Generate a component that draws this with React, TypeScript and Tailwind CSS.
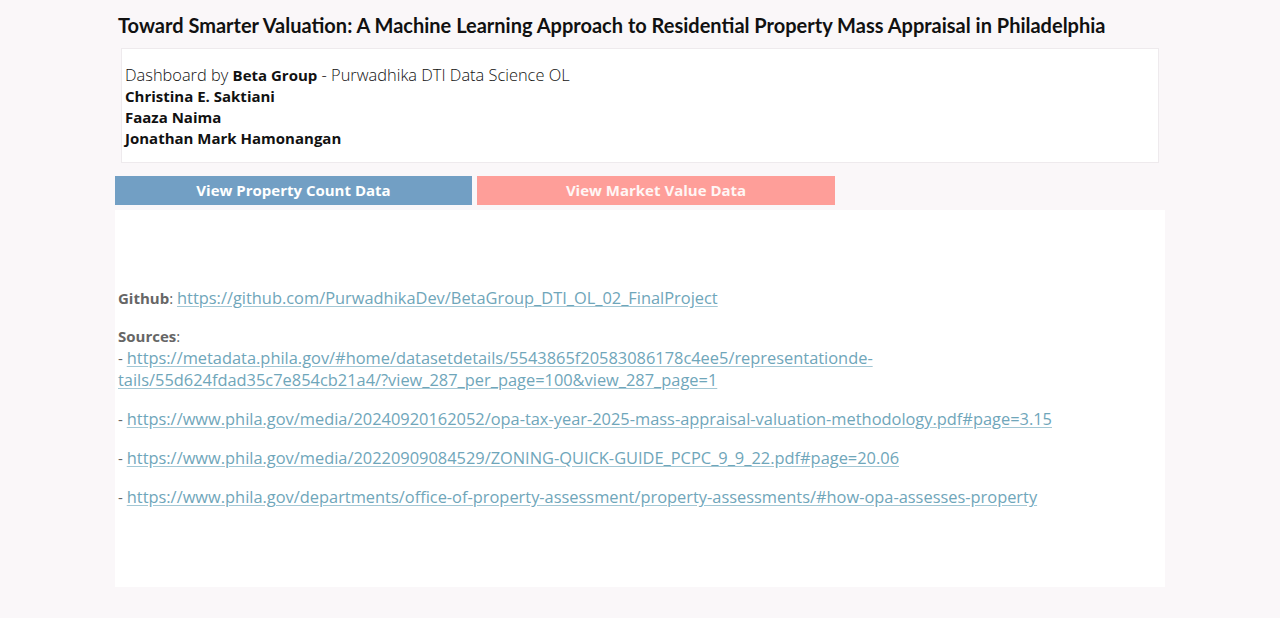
const links = [
  {
    href: "https://metadata.phila.gov/#home/datasetdetails/5543865f20583086178c4ee5/representationdetails/55d624fdad35c7e854cb21a4/?view_287_per_page=100&view_287_page=1",
    lines: [
      "https://metadata.phila.gov/#home/datasetdetails/5543865f20583086178c4ee5/representationde-",
      "tails/55d624fdad35c7e854cb21a4/?view_287_per_page=100&view_287_page=1",
    ],
  },
  {
    href: "https://www.phila.gov/media/20240920162052/opa-tax-year-2025-mass-appraisal-valuation-methodology.pdf#page=3.15",
    lines: ["https://www.phila.gov/media/20240920162052/opa-tax-year-2025-mass-appraisal-valuation-methodology.pdf#page=3.15"],
  },
  {
    href: "https://www.phila.gov/media/20220909084529/ZONING-QUICK-GUIDE_PCPC_9_9_22.pdf#page=20.06",
    lines: ["https://www.phila.gov/media/20220909084529/ZONING-QUICK-GUIDE_PCPC_9_9_22.pdf#page=20.06"],
  },
  {
    href: "https://www.phila.gov/departments/office-of-property-assessment/property-assessments/#how-opa-assesses-property",
    lines: ["https://www.phila.gov/departments/office-of-property-assessment/property-assessments/#how-opa-assesses-property"],
  },
];

const linkCls = "text-[16.4px] text-[#6fa6ba] underline decoration-[#a3c7d4] underline-offset-2";

const App = () => {
  return (
    <div className="min-h-[618px] w-full bg-[#faf7f9] font-['Open_Sans',sans-serif]">
      <div className="ml-[115px] w-[1050px] pt-[12px]">
        <h1 className="pl-[3px] text-[20px] font-bold leading-[26px] text-[#111] font-['Lato',sans-serif]">
          Toward Smarter Valuation: A Machine Learning Approach to Residential Property Mass Appraisal in Philadelphia
        </h1>

        <div className="mx-[6px] mt-[10px] h-[115px] border border-[#eeeaed] bg-white px-[3px] pt-[15px] text-[15px] leading-[21px] text-[#111]">
          <p className="text-[16.4px] font-light">
            Dashboard by <span className="text-[15px] font-bold">Beta Group</span> - Purwadhika DTI Data Science OL
          </p>
          <p className="font-bold">Christina E. Saktiani</p>
          <p className="font-bold">Faaza Naima</p>
          <p className="font-bold">Jonathan Mark Hamonangan</p>
        </div>

        <div className="mt-[13px] flex gap-[5px]">
          <button className="h-[29px] w-[357px] bg-[#729fc4] text-[15px] font-bold text-white">
            View Property Count Data
          </button>
          <button className="h-[29px] w-[358px] bg-[#fe9e99] text-[15px] font-bold text-[#fff6f5]">
            View Market Value Data
          </button>
        </div>

        <div className="mt-[5px] h-[377px] bg-white pl-[3px] pt-[77px] text-[15px] leading-[22px] text-[#666]">
          <p>
            <span className="font-bold">Github</span>:{" "}
            <a className={linkCls} href="https://github.com/PurwadhikaDev/BetaGroup_DTI_OL_02_FinalProject">
              https://github.com/PurwadhikaDev/BetaGroup_DTI_OL_02_FinalProject
            </a>
          </p>
          <p className="mt-[16px]">
            <span className="font-bold">Sources</span>:
          </p>
          {links.map((l, i) => (
            <p key={i} className={i === 0 ? "" : "mt-[17px]"}>
              {l.lines.map((line, j) => (
                <span key={j} className="block">
                  {j === 0 ? "- " : ""}
                  <a className={linkCls} href={l.href}>
                    {line}
                  </a>
                </span>
              ))}
            </p>
          ))}
        </div>
      </div>
    </div>
  );
};

export default App;
